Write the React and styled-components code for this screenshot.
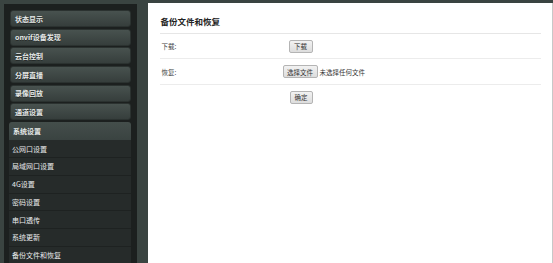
import React from 'react'
import styled, { createGlobalStyle } from 'styled-components'

const GlobalStyle = createGlobalStyle`
    html, body {
        margin: 0;
        padding: 0;
        background: #3a4441;
        overflow: hidden;
    }
    body {
        font-family: "Noto Sans CJK SC", "Noto Sans", sans-serif;
    }
`

const topMenu = ['状态显示', 'onvif设备发现', '云台控制', '分屏直播', '录像回放', '通道设置']
const subMenu = ['公网口设置', '局域网口设置', '4G设置', '密码设置', '串口透传', '系统更新', '备份文件和恢复']

function App() {
    return (
        <Page>
            <GlobalStyle />
            <Sidebar>
                <TopList>
                    {topMenu.map((name) => (
                        <MenuButton key={name}>{name}</MenuButton>
                    ))}
                </TopList>
                <Group>
                    <GroupHead>系统设置</GroupHead>
                    {subMenu.map((name) => (
                        <SubItem key={name}>{name}</SubItem>
                    ))}
                </Group>
            </Sidebar>
            <Content>
                <Title>备份文件和恢复</Title>
                <Row $h={24}>
                    <Label>下载:</Label>
                    <Control $indent={6}>
                        <Button $w={24}>下载</Button>
                    </Control>
                </Row>
                <Row $h={25}>
                    <Label>恢复:</Label>
                    <Control>
                        <Button $w={35}>选择文件</Button>
                        <FileName>未选择任何文件</FileName>
                    </Control>
                </Row>
                <Row $h={24} $plain>
                    <Label />
                    <Control $indent={7}>
                        <Button $w={23}>确定</Button>
                    </Control>
                </Row>
            </Content>
        </Page>
    )
}

export default App

const Page = styled.div`
    display: flex;
    align-items: flex-start;
    padding: 3px 0 0 4px;
    height: 260px;
    gap: 11px;
`

const Sidebar = styled.div`
    width: 122px;
    margin-top: 1px;
    height: 259px;
    padding: 6px 6px 0 6px;
    background: #1c201f;
    display: flex;
    flex-direction: column;
    gap: 2px;
    overflow: hidden;
`

const TopList = styled.div`
    display: flex;
    flex-direction: column;
    gap: 1.7px;
`

const MenuButton = styled.div`
    height: 17px;
    box-sizing: border-box;
    display: flex;
    align-items: center;
    padding-left: 4px;
    border: 1px solid #2b3230;
    border-radius: 3px;
    background: linear-gradient(#48524f, #363e3c);
    color: #e6e9e8;
    font-size: 7px;
    font-weight: 700;
    text-shadow: 0 1px 0 rgba(0, 0, 0, 0.4);
`

const Group = styled.div`
    display: flex;
    flex-direction: column;
    margin-left: -1px;
`

const GroupHead = styled.div`
    height: 18px;
    display: flex;
    align-items: center;
    padding-left: 4px;
    background: linear-gradient(#444e4b, #3a4341);
    border-radius: 3px 3px 0 0;
    color: #e6e9e8;
    font-size: 7px;
    font-weight: 700;
`

const SubItem = styled.div`
    height: 17.7px;
    box-sizing: border-box;
    display: flex;
    align-items: center;
    padding-left: 3px;
    background: #262b2a;
    border-bottom: 1px solid #1e2221;
    color: #e8eaea;
    font-size: 7px;
`

const Content = styled.div`
    width: 386px;
    height: 260px;
    padding: 0 11px 0 12px;
    background: #ffffff;
    border-right: 1px solid #c8c8c8;
`

const Title = styled.div`
    height: 31px;
    box-sizing: border-box;
    display: flex;
    align-items: center;
    padding: 5px 0 0 1px;
    border-bottom: 1px solid #e6e6e6;
    font-size: 8.5px;
    font-weight: 700;
    color: #222;
`

const Row = styled.div`
    display: grid;
    grid-template-columns: 123px 1fr;
    align-items: center;
    height: ${(p) => p.$h}px;
    border-bottom: 1px solid ${(p) => (p.$plain ? 'transparent' : '#ececec')};
`

const Label = styled.div`
    padding-left: 2px;
    font-size: 6.5px;
    color: #444;
`

const Control = styled.div`
    display: flex;
    align-items: center;
    gap: 2px;
    padding-left: ${(p) => p.$indent || 0}px;
`

const Button = styled.div`
    width: ${(p) => p.$w}px;
    height: 13px;
    box-sizing: border-box;
    display: flex;
    align-items: center;
    justify-content: center;
    background: linear-gradient(#f2f2f2, #dddddd);
    border: 1px solid #b4b4b4;
    border-radius: 2px;
    font-size: 6.5px;
    color: #333;
`

const FileName = styled.span`
    font-size: 6.5px;
    color: #333;
`
